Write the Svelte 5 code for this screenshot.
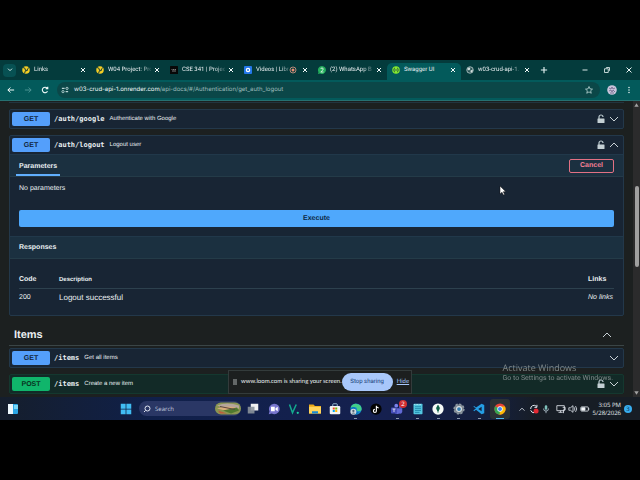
<script lang="ts">
	type Tab = { title: string; icon: string; active?: boolean; recording?: boolean };

	const tabs: Tab[] = [
		{ title: 'Links', icon: 'byu' },
		{ title: 'W04 Project: Pro', icon: 'byu' },
		{ title: 'CSE 341 | Projec', icon: 'dark' },
		{ title: 'Videos | Libr', icon: 'loom', recording: true },
		{ title: '(2) WhatsApp B', icon: 'whatsapp' },
		{ title: 'Swagger UI', icon: 'swagger', active: true },
		{ title: 'w03-crud-api-1.', icon: 'globe' }
	];

	const apps = [
		{ name: 'taskview' },
		{ name: 'chat' },
		{ name: 'vectric' },
		{ name: 'explorer' },
		{ name: 'store' },
		{ name: 'edge', running: true },
		{ name: 'tiktok' },
		{ name: 'teams', running: true },
		{ name: 'notepad', running: true },
		{ name: 'mongo', running: true },
		{ name: 'settings', running: true },
		{ name: 'vscode', running: true },
		{ name: 'chrome', running: true, active: true }
	];
</script>

{#snippet chevron(up: boolean)}
	<svg class="chevron" viewBox="0 0 10 10" aria-hidden="true">
		<path d={up ? 'M1 7 5 3l4 4' : 'M1 3l4 4 4-4'} fill="none" stroke="#c9d2d6" stroke-width="1" />
	</svg>
{/snippet}

{#snippet lock()}
	<svg class="lock" viewBox="0 0 8 10" aria-hidden="true">
		<path d="M2 5V3a2 2 0 0 1 4 0" fill="none" stroke="#bccbd0" stroke-width="1.2" />
		<path d="M1 4.500h6q.5 0 .5.5v3.500q0 .5-.5.5H1q-.5 0-.5-.5V5q0-.5.5-.5z" fill="#c4d0d4" />
	</svg>
{/snippet}

{#snippet summary(method: string, path: string, text: string, locked: boolean, open: boolean)}
	<div class="summary">
		<span class="method" class:post={method === 'POST'}>{method}</span>
		<span class="path">{path}</span>
		<span class="desc">{text}</span>
		<button class="plain toggles" aria-label="Toggle {path}">
			{#if locked}{@render lock()}{/if}
			{@render chevron(open)}
		</button>
	</div>
{/snippet}

<div class="screen">
	<header class="tabstrip">
		<button class="plain tab-search" aria-label="Search tabs">
			<svg viewBox="0 0 12 12"><path d="M3 4l3 3 3-3" fill="none" stroke="#e4f3f2" stroke-width="1.400" /></svg>
		</button>
		{#each tabs as tab}
			<div class="tab" class:active={tab.active}>
				<svg class="favicon" viewBox="0 0 16 16" aria-hidden="true">
					{#if tab.icon === 'byu'}
						<circle cx="8" cy="8" r="7.500" fill="#f4ce24" />
						<path d="M2 3q5 0 5 6l-2 6M14 3q-4 2-4 7M7 8l3 2" fill="none" stroke="#173b38" stroke-width="2" />
					{:else if tab.icon === 'dark'}
						<rect width="16" height="16" rx="1" fill="#080808" />
						<path d="M3 7h2m1 0h2m1 0h3M4 10h8" stroke="#bbb" stroke-width="1.300" />
					{:else if tab.icon === 'loom'}
						<rect width="16" height="16" rx="2" fill="#2478ea" />
						<circle cx="8" cy="8" r="4.500" fill="#fff" />
						<circle cx="8" cy="8" r="2" fill="#2478ea" />
					{:else if tab.icon === 'whatsapp'}
						<path d="M8 0a8 8 0 1 1-4 15l-4 1 1-4A8 8 0 0 1 8 0z" fill="#24ad5c" />
						<path d="M5.500 6q0-2 2.500-2t2.500 2Q10.500 8 5.500 12h5.500" fill="none" stroke="#fff" stroke-width="1.500" />
					{:else if tab.icon === 'swagger'}
						<circle cx="8" cy="8" r="7.500" fill="#85ea2d" />
						<path d="M6 4q-2 0-1.500 2.500Q4.500 8 3 8q1.500 0 1.500 1.500Q4 12 6 12M10 4q2 0 1.500 2.500Q11.500 8 13 8q-1.500 0-1.500 1.500Q12 12 10 12M6 8h4" fill="none" stroke="#173647" stroke-width="1.400" />
					{:else}
						<circle cx="8" cy="8" r="6.500" fill="#2c5557" stroke="#c8d8d7" stroke-width="1.500" />
						<path d="M3 5l4-2 2 3-3 3-3-2zM9 9l5-2-2 6-3-1z" fill="#d4e0df" />
					{/if}
				</svg>
				<span class="tab-title">{tab.title}</span>
				{#if tab.recording}
					<svg class="recording" viewBox="0 0 8 8"><circle cx="4" cy="4" r="3" fill="none" stroke="#df9c88" stroke-width=".8" /><circle cx="4" cy="4" r="1.500" fill="#ec8c72" /></svg>
				{/if}
				<button class="plain close" aria-label="Close tab">
					<svg viewBox="0 0 6 6"><path d="M1 1l4 4M5 1 1 5" stroke="#f2fafa" /></svg>
				</button>
			</div>
		{/each}
		<button class="plain new-tab" aria-label="New tab">
			<svg viewBox="0 0 8 8"><path d="M4 1.500v5M1.500 4h5" stroke="#e6f4f3" stroke-width=".9" /></svg>
		</button>
		<div class="window-controls">
			<button class="plain" aria-label="Minimize"><svg viewBox="0 0 8 8"><path d="M2 4h4" stroke="#d9e8e7" stroke-width=".8" /></svg></button>
			<button class="plain" aria-label="Restore"><svg viewBox="0 0 8 8"><path d="M2 3h3v3H2zM3.500 2.500V2H6v2.500h-.5" fill="none" stroke="#d9e8e7" stroke-width=".7" /></svg></button>
			<button class="plain" aria-label="Close window"><svg viewBox="0 0 8 8"><path d="M2 2l4 4M6 2 2 6" stroke="#e9f3f2" stroke-width=".8" /></svg></button>
		</div>
	</header>

	<nav class="toolbar">
		<button class="plain" aria-label="Back"><svg viewBox="0 0 8 8"><path d="M6.500 4h-5M3.500 2 1.500 4l2 2" fill="none" stroke="#f1fbfa" stroke-width=".8" /></svg></button>
		<button class="plain" aria-label="Forward"><svg viewBox="0 0 8 8"><path d="M1.500 4h5M4.500 2l2 2-2 2" fill="none" stroke="#4b9292" stroke-width=".8" /></svg></button>
		<button class="plain" aria-label="Reload"><svg viewBox="0 0 8 8"><path d="M6 5A2.200 2.200 0 1 1 5.700 2.500M6.200 1.300v1.700H4.500" fill="none" stroke="#f1fbfa" stroke-width=".9" /></svg></button>
		<div class="address">
			<svg viewBox="0 0 8 8" aria-hidden="true"><path d="M1.500 2.700h2.200M4.500 5.300h2" stroke="#b9d4d3" /><circle cx="5.600" cy="2.700" r=".9" fill="none" stroke="#b9d4d3" stroke-width=".7" /><circle cx="2.400" cy="5.300" r=".9" fill="none" stroke="#b9d4d3" stroke-width=".7" /></svg>
			<span class="url"><b>w03-crud-api-1.onrender.com</b>/api-docs/#/Authentication/get_auth_logout</span>
			<button class="plain" aria-label="Bookmark"><svg viewBox="0 0 8 8"><path d="M4 1.200l.8 1.900 2 .2-1.500 1.300.5 2L4 5.500 2.200 6.600l.5-2-1.500-1.300 2-.2z" fill="none" stroke="#c4dedc" stroke-width=".6" /></svg></button>
		</div>
		<button class="plain avatar" aria-label="Profile">
			<svg viewBox="0 0 10 10"><circle cx="5" cy="5" r="4.800" fill="#c9c6dc" /><path d="M2 3l2 1 1-2 1 2 2-1M2 6l2-1 1 2 1-2 2 2M3 8h4" fill="none" stroke="#6c6287" stroke-width=".8" /></svg>
		</button>
		<button class="plain" aria-label="Menu"><svg viewBox="0 0 8 8"><g fill="#eaf6f5"><circle cx="4" cy="2" r=".6" /><circle cx="4" cy="4" r=".6" /><circle cx="4" cy="6" r=".6" /></g></svg></button>
	</nav>

	<div class="viewport">
		<main>
			<div class="block-end"></div>
			<section class="block">
				{@render summary('GET', '/auth/google', 'Authenticate with Google', true, false)}
			</section>
			<section class="block">
				{@render summary('GET', '/auth/logout', 'Logout user', true, true)}
				<div class="section-head">
					<h4 class="underlined">Parameters</h4>
					<button class="cancel">Cancel</button>
				</div>
				<p class="no-params">No parameters</p>
				<button class="execute">Execute</button>
				<div class="section-head responses"><h4>Responses</h4></div>
				<table>
					<thead>
						<tr><th class="code">Code</th><th class="description">Description</th><th class="links">Links</th></tr>
					</thead>
					<tbody>
						<tr><td>200</td><td class="result">Logout successful</td><td><i>No links</i></td></tr>
					</tbody>
				</table>
			</section>
			<h3>
				Items
				<button class="plain" aria-label="Collapse items">{@render chevron(true)}</button>
			</h3>
			<section class="block">
				{@render summary('GET', '/items', 'Get all items', false, false)}
			</section>
			<section class="block green">
				{@render summary('POST', '/items', 'Create a new item', true, false)}
			</section>
		</main>
		<div class="scrollbar">
			<svg viewBox="0 0 8 8"><path d="M4 2 6.500 6h-5z" fill="#a2a2a2" /></svg>
			<span class="thumb"></span>
			<svg viewBox="0 0 8 8"><path d="M4 6 6.500 2h-5z" fill="#a2a2a2" /></svg>
		</div>

		<svg class="cursor" viewBox="0 0 8 10" aria-hidden="true"><path d="M1 0v8l2-1.800 1.300 2.800 1.300-.6-1.300-2.700h2.500z" fill="#fff" stroke="#111" stroke-width=".5" /></svg>
		<div class="watermark">
			<strong>Activate Windows</strong>
			<span>Go to Settings to activate Windows.</span>
		</div>
		<div class="sharing">
			<svg viewBox="0 0 4 8" aria-hidden="true"><path d="M1 1v6M3 1v6" stroke="#d0d5d5" stroke-width=".8" /></svg>
			<span>www.loom.com is sharing your screen.</span>
			<button class="stop">Stop sharing</button>
			<a href="#hide">Hide</a>
		</div>
	</div>

	<footer class="taskbar">
		<svg class="widgets" viewBox="0 0 12 12" aria-hidden="true"><rect x="1" y="1" width="10" height="10" rx="1" fill="#2ba6e5" /><path d="M1 1h5v10H1z" fill="#eef8fc" /><path d="M7 2h4v4H7z" fill="#79d7f7" /></svg>
		<div class="pinned">
			<button class="plain app" aria-label="Start">
				<svg viewBox="0 0 16 16"><path d="M1 1h6.500v6.500H1zM8.500 1H15v6.500H8.500zM1 8.500h6.500V15H1zM8.500 8.500H15V15H8.500z" fill="#41bdf3" /></svg>
			</button>
			<label class="search">
				<svg class="glass" viewBox="0 0 8 8"><circle cx="4.500" cy="3.500" r="2.500" fill="none" stroke="#e1e6f3" /><path d="M2.500 5.500 1 7" stroke="#e1e6f3" /></svg>
				<input type="text" placeholder="Search" aria-label="Search" />
				<svg class="highlight" viewBox="0 0 26 12" aria-hidden="true"><rect y="0" width="26" height="12" rx="6" fill="#8a9652" /><path d="M2 3Q12-1 24 3v3L8 5z" fill="#b5a59b" /><path d="M2 6q10-4 22 0L14 9z" fill="#d8ac7a" /><path d="M8 8l14-3 2 3-8 3z" fill="#4f792f" /><path d="M3 8l9 3H5z" fill="#bd5d3d" /><path d="M5 4l15 3" stroke="#5c4541" /></svg>
			</label>
			<div class="apps">
				{#each apps as app}
					<button class="plain app" class:running={app.running} class:active={app.active} aria-label={app.name}>
						<svg viewBox="0 0 16 16">
							{#if app.name === 'taskview'}
								<path d="M5 1h10v9H5z" fill="#f1f1f1" /><path d="M1 5h9v9H1z" fill="#8b929b" opacity=".9" />
							{:else if app.name === 'chat'}
								<path d="M8 1a7 7 0 1 1-3 13l-4 1 1-4A7 7 0 0 1 8 1z" fill="#7775cd" /><path d="M4 5h5v6H4zM10 7l3-2v6l-3-2z" fill="#fff" />
							{:else if app.name === 'vectric'}
								<path d="M2 2l4 11L11 2" fill="none" stroke="#13aa8e" stroke-width="2" /><circle cx="13" cy="13" r="1.500" fill="#20d0a2" />
							{:else if app.name === 'explorer'}
								<path d="M0 2h6l2 2h8v10H0z" fill="#eca919" /><path d="M0 5h16v9H0z" fill="#ffd45b" /><path d="M4 11h8v3H4z" fill="#1889d5" />
							{:else if app.name === 'store'}
								<path d="M5 4V2q0-1 1-1h4q1 0 1 1v2" fill="none" stroke="#bce5f7" /><rect x="1" y="4" width="14" height="11" rx="1.500" fill="#f1f4f6" /><path d="M5 6h2.700v2.700H5z" fill="#f25022" /><path d="M8.300 6H11v2.700H8.300z" fill="#7fba00" /><path d="M5 9.300h2.700V12H5z" fill="#00a4ef" /><path d="M8.300 9.300H11V12H8.300z" fill="#ffb900" />
							{:else if app.name === 'edge'}
								<circle cx="8" cy="8" r="7.500" fill="#148bd3" /><path d="M1 6a7.500 7.500 0 0 1 14.500 2q0 3-4 3-3 0-2-3Q9 4 1 6z" fill="#43cf87" /><path d="M1 7q6-4 7 2 0 2 4 4-4 3-8 1z" fill="#0875bc" /><circle cx="4.500" cy="11.500" r="4" fill="#cfd9df" /><circle cx="4.500" cy="10.500" r="1.500" fill="#526475" /><path d="M2 14q2.500-3 5 0z" fill="#526475" />
							{:else if app.name === 'tiktok'}
								<circle cx="8" cy="8" r="7.500" fill="#030303" /><path d="M8.500 3.500v7a2 2 0 1 1-2-2M8.500 4q.5 2.500 3 2.500" fill="none" stroke="#fff" stroke-width="1.500" />
							{:else if app.name === 'teams'}
								<circle cx="7" cy="3.500" r="2.500" fill="#7b83eb" /><circle cx="12.500" cy="5" r="2" fill="#5059c9" /><path d="M4 7h11v5q-1 3-4 2-5 2-7-2z" fill="#6269d4" /><rect y="6" width="8" height="8" rx="1" fill="#464eb8" /><path d="M2 8h4M4 8v4" stroke="#fff" />
							{:else if app.name === 'notepad'}
								<rect x="2" y="1" width="12" height="14" rx="1" fill="#52c5df" /><path d="M4 5h8M4 7.500h8M4 10h8M4 12.500h6" stroke="#167ba0" /><path d="M3 2h10" stroke="#d8f4fa" stroke-dasharray="1 1" />
							{:else if app.name === 'mongo'}
								<circle cx="8" cy="8" r="7.500" fill="#f6faf7" /><path d="M8 3q4 4 0 8-4-4 0-8zM8 9v4" fill="#116149" stroke="#116149" />
							{:else if app.name === 'settings'}
								<circle cx="8" cy="8" r="6.500" fill="#7c8790" stroke="#8e99a2" stroke-width="2" stroke-dasharray="3 2" /><circle cx="8" cy="8" r="4" fill="#dce1e4" /><circle cx="8" cy="8" r="2.500" fill="#347bad" />
							{:else if app.name === 'vscode'}
								<path d="M11.500 1 15 2.500v11L11.500 15 4 9l-2.500 2L.5 10 4 7 .5 5l1-1L4 6z" fill="#249ee5" /><path d="M11.500 5v6L7 8z" fill="#12243e" />
							{:else}
								<circle cx="8" cy="8" r="7.500" fill="#e84436" /><path d="M8 8 1.500 4.300a7.500 7.500 0 0 0 6 11.200L11 9z" fill="#34a853" /><path d="M8 8l-.5 7.500A7.500 7.500 0 0 0 14.500 4.500H8z" fill="#fbbc05" /><circle cx="8" cy="8" r="3.600" fill="#fff" /><circle cx="8" cy="8" r="2.700" fill="#4285f4" />
							{/if}
						</svg>
						{#if app.name === 'teams'}<span class="badge">2</span>{/if}
					</button>
				{/each}
			</div>
		</div>
		<div class="tray">
			<svg viewBox="0 0 12 12"><path d="M3 8l3-3 3 3" fill="none" stroke="#dde3ea" /></svg>
			<svg viewBox="0 0 12 12"><path d="M2 6a4 4 0 0 1 7-3M9.500 1v3H6.500M2 7.500q1 3 4 3" fill="none" stroke="#e2e7ed" stroke-width="1.200" /><circle cx="8.500" cy="8.500" r="3" fill="#e32932" /></svg>
			<svg viewBox="0 0 12 12"><rect x="4.500" y="1.500" width="3" height="5.500" rx="1.500" fill="#7fc2bc" /><path d="M3 5.500q0 3 3 3t3-3M6 8.500V11" fill="none" stroke="#b7c9d4" /></svg>
			<svg class="spaced" viewBox="0 0 12 12"><path d="M1 2h9v6H1zM5.500 8v2M3 10h5M8 4h3v3H9v4" fill="none" stroke="#e1e6ec" /></svg>
			<svg viewBox="0 0 12 12"><path d="M1 4.500h2L6 2v8L3 7.500H1zM7.500 4q1.500 2 0 4M9 2.500q3 3.500 0 7" fill="none" stroke="#dbe1e8" /></svg>
			<svg viewBox="0 0 12 12"><rect x="1" y="3.500" width="9" height="5" rx="1" fill="none" stroke="#e5eaf0" /><path d="M2 4.500h4v3H2zM10.500 5v2" fill="#fff" stroke="#e5eaf0" /></svg>
			<div class="clock"><span>3:05 PM</span><span>5/28/2026</span></div>
			<span class="notices">3</span>
		</div>
	</footer>
</div>

<style>
	:global(body) {
		background: #000;
	}

	.screen {
		padding: 60px 0;
		background: #000;
		color: #e8eef0;
		font-family: 'Liberation Sans', Arial, sans-serif;
		font-size: 7px;
		line-height: 10px;
		text-rendering: geometricPrecision;
	}

	button,
	input {
		font: inherit;
		color: inherit;
		text-rendering: inherit;
	}

	.plain {
		display: flex;
		align-items: center;
		justify-content: center;
		padding: 0;
		border: 0;
		background: none;
	}

	svg {
		display: block;
		width: 10px;
		height: 10px;
		flex: none;
	}

	/* browser chrome */
	.tabstrip {
		display: flex;
		align-items: center;
		height: 20px;
		padding-left: 3px;
		background: #043b3c;
		font-family: Roboto, 'Noto Sans', sans-serif;
		font-size: 6px;
	}

	.tab-search {
		width: 13px;
		height: 13px;
		margin-right: 1px;
		border-radius: 4px;
		background: #075153;
	}

	.tab-search svg {
		width: 8px;
		height: 8px;
	}

	.tab {
		display: flex;
		flex: 0 1 74px;
		align-items: center;
		align-self: flex-end;
		box-sizing: border-box;
		min-width: 0;
		height: 17px;
		padding: 0 4px 3px 5px;
		border-radius: 5px 5px 0 0;
	}

	.tab.active {
		background: #035a5b;
	}

	.favicon {
		width: 8px;
		height: 8px;
	}

	.tab-title {
		flex: 1;
		min-width: 0;
		margin-left: 4px;
		white-space: nowrap;
		mask-image: linear-gradient(90deg, #000 75%, rgba(0, 0, 0, 0.2));
	}

	.tab.active .tab-title {
		mask-image: none;
	}

	.recording {
		width: 8px;
		height: 8px;
		margin-right: 2px;
	}

	.close {
		width: 8px;
		margin-left: 2px;
	}

	.close svg {
		width: 6px;
		height: 6px;
	}

	.new-tab {
		margin-left: 4px;
	}

	.window-controls {
		display: flex;
		gap: 12px;
		margin-left: auto;
		padding-right: 6px;
	}

	.toolbar {
		display: flex;
		align-items: center;
		gap: 7px;
		height: 20px;
		padding: 0 6px;
		border-bottom: 1px solid #267071;
		background: #035a5b;
	}

	.address {
		display: flex;
		flex: 1;
		align-items: center;
		height: 16px;
		padding: 0 6px 0 3px;
		border-radius: 8px;
		background: #0b4748;
	}

	.url {
		flex: 1;
		margin-left: 4px;
		color: #9dbcbc;
		font-family: Inter, 'Open Sans', sans-serif;
		font-size: 6px;
	}

	.url b {
		color: #f0f9f8;
		font-weight: 400;
	}

	/* api docs page */
	.viewport {
		display: flex;
		position: relative;
		background: #1c2020;
	}

	main {
		flex: 1;
		min-width: 0;
		padding: 0 9px 3px;
	}

	.block-end {
		height: 1px;
		margin-bottom: 6px;
		border-bottom: 1px solid #22343f;
	}

	.block {
		margin-bottom: 6px;
		border: 1px solid #23384a;
		border-radius: 2px;
		background: #182534;
	}

	.block.green {
		margin-bottom: 0;
		border-color: #14382f;
		background: #122a27;
	}

	.summary {
		display: flex;
		align-items: center;
		height: 18px;
		padding: 0 4px 0 2px;
	}

	.method {
		width: 38px;
		padding-top: 1px;
		border-radius: 2px;
		background: #549ffb;
		color: #12263c;
		font-weight: 700;
		line-height: 13px;
		text-align: center;
	}

	.method.post {
		background: #10b56b;
		color: #08331f;
	}

	.path {
		margin-left: 4px;
		font-family: 'DejaVu Sans Mono', monospace;
		font-weight: 700;
	}

	.desc {
		margin-left: 5px;
		font-size: 6px;
	}

	.toggles {
		gap: 4px;
		margin-left: auto;
	}

	.lock {
		width: 8px;
	}

	.section-head {
		display: flex;
		align-items: center;
		justify-content: space-between;
		height: 23px;
		padding: 1px 9px 0;
		border-top: 1px solid #21384a;
		border-bottom: 1px solid #243b48;
		background: #1b3040;
		box-sizing: border-box;
	}

	h4 {
		margin: 0;
		font-size: 7px;
		font-weight: 700;
	}

	.underlined {
		align-self: stretch;
		box-sizing: border-box;
		margin-left: -3px;
		padding: 0 3px;
		border-bottom: 2px solid #61affe;
		line-height: 21px;
	}

	.cancel {
		width: 45px;
		height: 14px;
		padding: 0;
		border: 1px solid #e27184;
		border-radius: 2px;
		background: transparent;
		color: #f27f94;
		font-weight: 700;
		line-height: 12px;
	}

	.no-params {
		margin: 7px 9px 16px;
	}

	.execute {
		display: block;
		width: calc(100% - 18px);
		height: 17px;
		margin: 0 9px 9px;
		padding: 1px 0 0;
		border: 0;
		border-radius: 2px;
		background: #4fa8fc;
		color: #0d2742;
		font-weight: 700;
	}

	table {
		width: calc(100% - 18px);
		margin: 15px 9px 8px;
		border-collapse: collapse;
	}

	th,
	td {
		padding: 0;
		text-align: left;
	}

	th {
		height: 12px;
		padding-bottom: 2px;
		border-bottom: 1px solid #2d414e;
	}

	td {
		height: 18px;
	}

	.code {
		width: 40px;
	}

	.description {
		font-size: 6px;
	}

	.links {
		width: 26px;
	}

	td i {
		white-space: nowrap;
	}

	.result {
		font-size: 8px;
	}

	h3 {
		display: flex;
		align-items: center;
		justify-content: space-between;
		height: 21px;
		margin: 0 0 2px;
		padding: 2px 12px 0 5px;
		border-bottom: 1px solid #3a4546;
		font-size: 11px;
	}

	.scrollbar {
		display: flex;
		flex-direction: column;
		align-items: center;
		width: 7px;
		background: #2b2b2c;
	}

	.scrollbar svg {
		width: 7px;
		height: 8px;
	}

	.thumb {
		width: 4px;
		height: 81px;
		margin: 77px 0 auto;
		border-radius: 2px;
		background: #a0a0a0;
	}

	.cursor {
		position: absolute;
		top: 85px;
		left: 78%;
		width: 8px;
	}

	.watermark {
		display: flex;
		flex-direction: column;
		position: absolute;
		right: 27px;
		bottom: 14px;
		color: #8f9898;
		font-family: Roboto, 'Noto Sans', sans-serif;
		font-size: 7px;
		opacity: 0.85;
	}

	.watermark strong {
		font-family: 'Open Sans', 'Noto Sans', sans-serif;
		font-size: 9px;
		font-weight: 400;
	}

	.sharing {
		display: flex;
		align-items: center;
		position: absolute;
		bottom: 3px;
		left: 50%;
		box-sizing: border-box;
		width: 184px;
		height: 24px;
		padding: 0 4px;
		border: 1px solid #333b3b;
		background: #1c1f1f;
		font-family: Lato, 'Open Sans', sans-serif;
		font-size: 6px;
		white-space: nowrap;
		transform: translateX(-50%);
	}

	.sharing svg {
		width: 4px;
		height: 8px;
		margin-right: 4px;
	}

	.stop {
		flex: none;
		width: 51px;
		height: 18px;
		margin: 0 4px 0 auto;
		padding: 0;
		border: 0;
		border-radius: 9px;
		background: #a8c7fa;
		color: #173d78;
		font-family: Roboto, 'Open Sans', sans-serif;
	}

	.sharing a {
		color: #a8c7fa;
	}

	/* windows taskbar */
	.taskbar {
		display: flex;
		align-items: center;
		height: 23px;
		padding: 0 8px 0 7px;
		background: linear-gradient(90deg, #151e2c 0%, #10204a 24%, #15204f 60%, #151f3a 78%, #171d25 84%);
		font-family: 'Open Sans', 'Noto Sans', sans-serif;
	}

	.widgets {
		width: 12px;
		height: 12px;
	}

	.pinned {
		display: flex;
		align-items: center;
		margin-left: auto;
	}

	.apps {
		display: flex;
		justify-content: space-between;
		width: 267px;
	}

	.app {
		position: relative;
		width: 20px;
		height: 20px;
		border-radius: 3px;
	}

	.app svg {
		width: 12px;
		height: 12px;
	}

	.app.active {
		background: #2b3235;
	}

	.running::after {
		content: '';
		position: absolute;
		bottom: 0;
		width: 3px;
		height: 1px;
		background: #8c98ab;
	}

	.running.active::after {
		width: 8px;
		background: #50b7e9;
	}

	.badge {
		position: absolute;
		top: 1px;
		right: 0;
		width: 8px;
		border-radius: 4px;
		background: #d22f32;
		color: #fff;
		font-size: 6px;
		line-height: 8px;
	}

	.search {
		display: flex;
		align-items: center;
		width: 102px;
		height: 15px;
		margin: 0 2px 0 3px;
		border-radius: 8px;
		background: #2a3765;
	}

	.glass {
		width: 8px;
		height: 8px;
		margin: 0 4px;
	}

	.search input {
		flex: 1;
		min-width: 0;
		padding: 0;
		border: 0;
		background: none;
		font-size: 6px;
	}

	.search input::placeholder {
		color: #c4ccdf;
		opacity: 1;
	}

	.highlight {
		width: 26px;
		height: 13px;
	}

	.tray {
		display: flex;
		align-items: center;
		gap: 2px;
		margin-left: 7px;
	}

	.spaced {
		margin-left: 3px;
	}

	.clock {
		display: flex;
		flex-direction: column;
		width: 29px;
		font-size: 6px;
		line-height: 8px;
		text-align: right;
	}

	.notices {
		width: 8px;
		margin-left: 1px;
		border-radius: 4px;
		background: #38aef0;
		color: #09243c;
		font-size: 6px;
		line-height: 8px;
		text-align: center;
	}
</style>
